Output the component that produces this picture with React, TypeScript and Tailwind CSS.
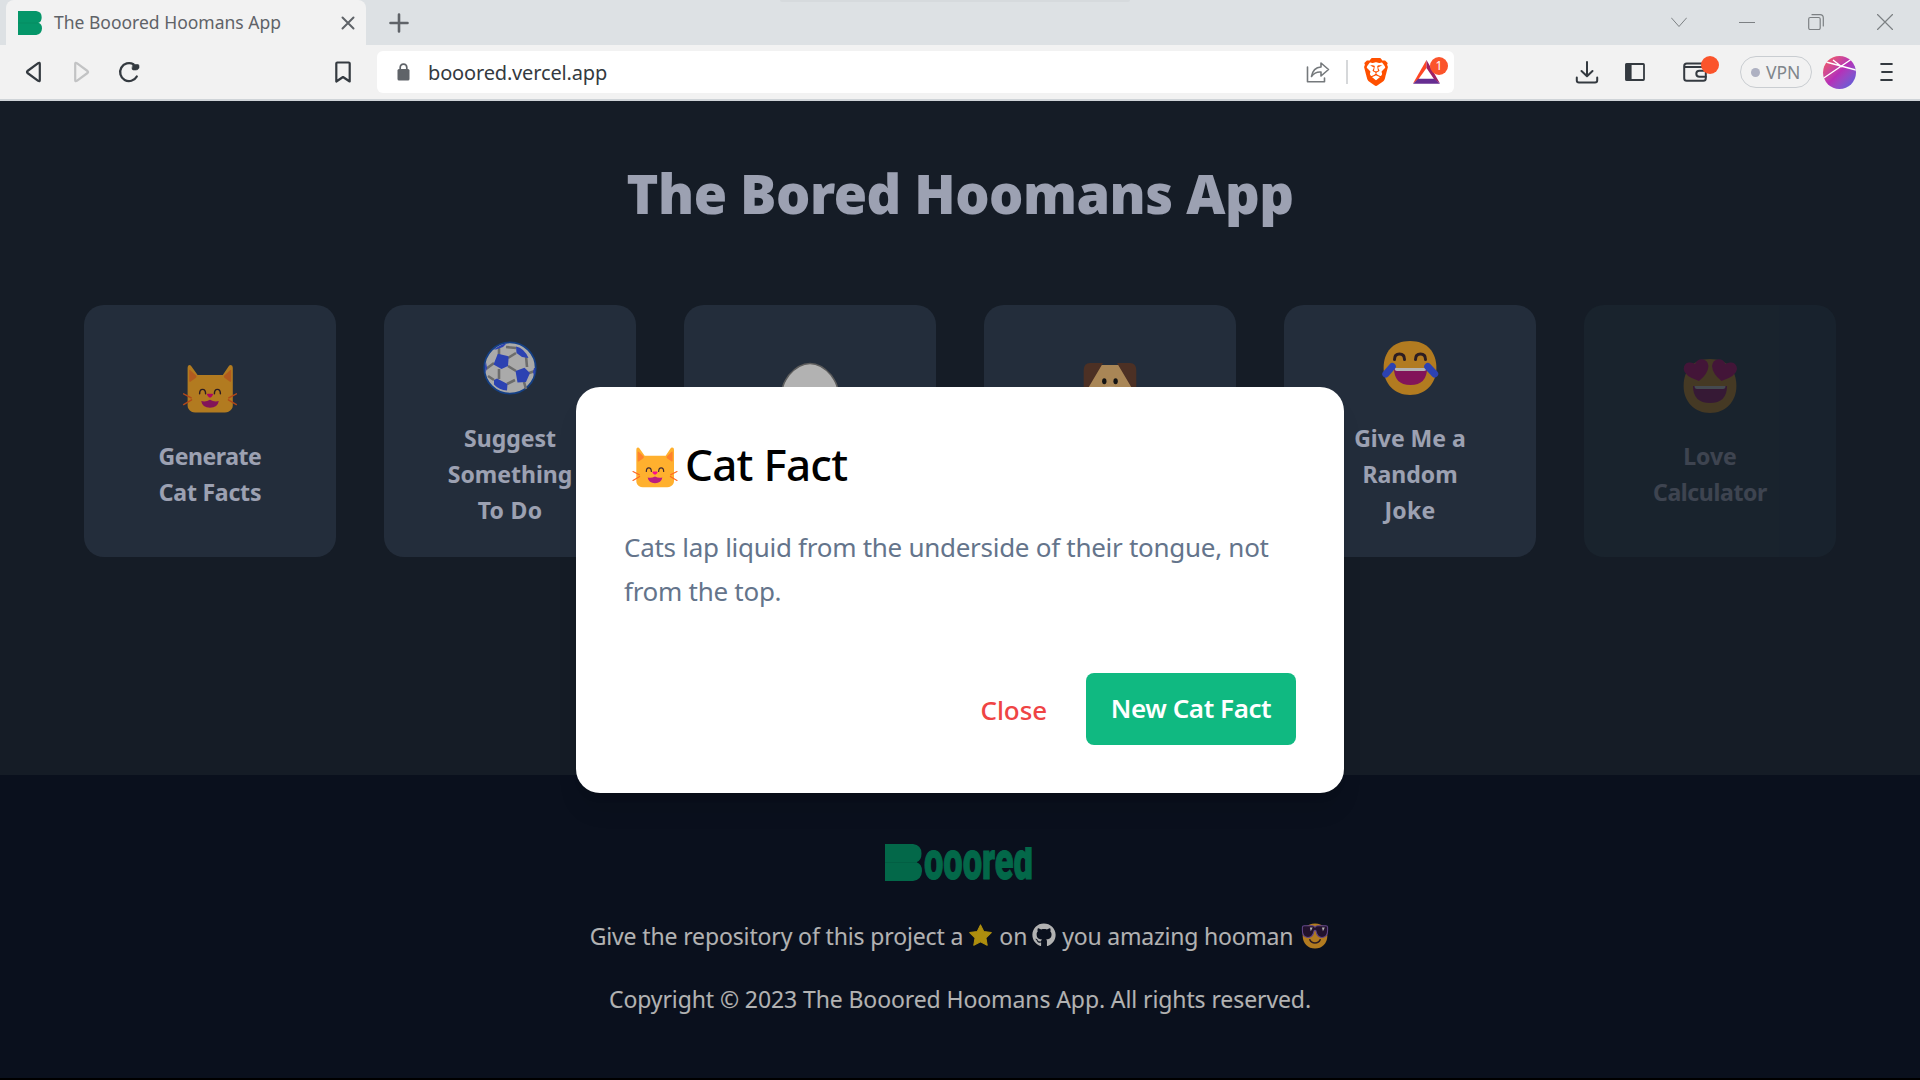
import type { ReactNode } from "react";
import { FaGithub } from "react-icons/fa";
import { SiBrave } from "react-icons/si";

function CatFace({ className }: { className: string }) {
  return (
    <svg viewBox="30 12.5 150 150" className={className}>
      <path
        d="M49 42 Q49 33 57 36 L74 60 H137 L153 36 Q162 33 162 42 V136 Q162 146 151 152 Q148 154 142 154 H68 Q62 154 59 152 Q49 146 49 136 Z"
        fill="#ffb02e"
      />
      <path d="M53 49 Q53 45 56 48 L71 62 Q72 65 70 67 L56 77 Q53 78 53 74 Z M158 49 Q158 45 155 48 L140 62 Q139 65 141 67 L155 77 Q158 78 158 74 Z" fill="#ff822d" />
      <path d="M79 107 Q79 96 86.500 96 Q94 96 94 107 M116 107 Q116 96 123.500 96 Q131 96 131 107" fill="none" stroke="#402a32" strokeWidth="3.600" strokeLinecap="round" />
      <path d="M97 109 Q97 107 100 107 H110 Q113 107 113 109 Q110 115 105 117 Q100 115 97 109 Z" fill="#f70a8d" />
      <path d="M83 125 Q94 128 105 122 Q116 128 127 125 Q124 142 105 142 Q86 142 83 125 Z" fill="#bb1d80" />
      <path d="M39 107 L58 117 M39 134 L59 122 M171 107 L152 117 M171 134 L151 122" stroke="#ff6723" strokeWidth="3.500" strokeLinecap="round" />
    </svg>
  );
}

function SoccerBall() {
  return (
    <svg viewBox="0 0 60 60" className="size-[60px]">
      <circle cx="30" cy="30" r="25.700" fill="#f4f4f4" stroke="#1d5bbf" strokeWidth="1.800" />
      <path
        d="M19 10 V17 M28 20 L36 15 M28 28 L36 33 M19 31 V41 M46 18 L47 29 M35 42 L27 46 M14 25 L6 31 M44 44 L46 51 M49 35 L55 33 M26 9 L36 10 M8 38 L14 42"
        stroke="#9b9b9b"
        strokeWidth="2.600"
        fill="none"
      />
      <path
        d="M17.500 16.500 Q18 15.500 19 16 L27.500 18 Q28.800 18.500 28.600 20 L28 28 L21.500 31 L13.500 26.500 Z M44.500 29.700 L50 35 L46 44 L37.500 44.500 L35.500 33 Z M36 8.500 Q44 10 48.500 20 L42 19 L36.500 15 Z M17 40.500 L27.500 46 L27 52.500 Q19 52 14 46.500 V42 Z M14 11.500 Q20 6.500 27 5 L23 9 L16 11.500 Z M54 30 L55.500 30 Q55.500 34 54 38 L53 34 Z M5 28 L6 24 L7 30 L5.500 35 Z"
        fill="#3f5fff"
      />
    </svg>
  );
}

function Egg() {
  return (
    <svg viewBox="0 0 60 60" className="size-[60px]">
      <path d="M2.500 33 Q2.500 28 9 19 Q19 7.500 30 7.500 Q41 7.500 51 19 Q57.500 28 57.500 33 Q57 55 30 55 Q3 55 2.500 33 Z" fill="#fff" stroke="#848484" strokeWidth="1.500" />
    </svg>
  );
}

function Dog() {
  return (
    <svg viewBox="0 0 60 60" className="size-[60px]">
      <path d="M8 9 H52 V54 H8 Z" fill="#f3c07b" />
      <path d="M10 7 H23 L7 34 H3.700 V14 Q4 7 10 7 Z M50 7 H37 L53 34 H56.300 V14 Q56 7 50 7 Z" fill="#6d4534" />
      <ellipse cx="24.300" cy="25.300" rx="2.200" ry="3" fill="#1c1c1c" />
      <ellipse cx="35.600" cy="25.300" rx="2.200" ry="3" fill="#1c1c1c" />
      <ellipse cx="30" cy="38" rx="12" ry="8" fill="#fcd5a0" />
    </svg>
  );
}

const facePath = "M30 3 C47 3 56.400 14 56.400 30 C56.400 46 45 57 30 57 C15 57 3.600 46 3.600 30 C3.600 14 13 3 30 3 Z";

function JoyFace() {
  return (
    <svg viewBox="0 0 60 60" className="size-[60px]">
      <path d={facePath} fill="#ffb02e" />
      <path d="M14.500 21.500 Q14.500 16 19.500 16 Q24.500 16 24.500 21.500 M35.500 21.500 Q35.500 16 40.500 16 Q45.500 16 45.500 21.500" fill="none" stroke="#402a32" strokeWidth="3" strokeLinecap="round" />
      <path d="M14 30 H47 Q47 47 30.500 47 Q14 47 14 30 Z" fill="#bb1d80" />
      <path d="M14.500 30 H46.500 Q46.500 33 44 33 H17 Q14.500 33 14.500 30 Z" fill="#fff" />
      <path d="M12.300 28.500 L5.800 36 M47.700 28.500 L54.700 36" stroke="#3f5fff" strokeWidth="7" strokeLinecap="round" />
    </svg>
  );
}

function HeartEyes() {
  return (
    <svg viewBox="0 0 60 60" className="size-[60px]">
      <path d={facePath} fill="#ffb02e" />
      <path
        d="M19 25 Q4 20 3.700 13 Q4 7 9 6.500 Q12.500 6 15 8 Q17 3 22 3.200 Q28 4 28.500 10 Q28 18 19 25 Z M41.500 25 Q56.500 20 57 13 Q56.500 7 51.500 6.500 Q48 6 45.500 8 Q43.500 3 38.500 3.200 Q32.500 4 32 10 Q32.500 18 41.500 25 Z"
        fill="#f70a8d"
      />
      <path d="M13 30 H47 Q47 47 30 47 Q13 47 13 30 Z" fill="#bb1d80" />
      <path d="M14.500 30 H45.500 Q45.500 33 43 33 H17 Q14.500 33 14.500 30 Z" fill="#fff" />
    </svg>
  );
}

function CoolFace() {
  return (
    <svg viewBox="0 0 60 60" className="size-[28px]">
      <path d={facePath} fill="#ffb02e" />
      <path d="M19 38 Q22 45 30 45 Q38 45 41 38" fill="none" stroke="#402a32" strokeWidth="3.500" strokeLinecap="round" />
      <path d="M3 11 Q3 8 7 8 H24 Q28 8 30 11 Q32 8 36 8 H53 Q57 8 57 11 V19 Q57 33 45 33 Q34 33 32 19 Q30 16 28 19 Q26 33 15 33 Q3 33 3 19 Z" fill="#321b41" stroke="#8d65c5" strokeWidth="2.200" />
      <path d="M19 12 L25 12 L21 20 Z M45 12 L51 12 L47 20 Z" fill="#fff" />
    </svg>
  );
}

function BrandMark({ className }: { className: string }) {
  return (
    <svg viewBox="0 0 37 37" preserveAspectRatio="none" className={className}>
      <path d="M0 0 H28 Q36.500 1 36.500 9.500 Q36.500 16.500 31.500 18.300 Q37 20 37 27 Q36.500 36 28 37 H0 Z" fill="#059669" />
      <path d="M0 18.500 H31" stroke="#04805a" strokeWidth="0.600" />
    </svg>
  );
}

function Stroke({ className, box, children }: { className: string; box: string; children: ReactNode }) {
  return (
    <svg viewBox={box} fill="none" stroke="currentColor" strokeLinejoin="round" strokeLinecap="round" className={className}>
      {children}
    </svg>
  );
}

function TabStrip() {
  return (
    <div className="relative flex h-[45px] items-center bg-[#dde1e4] pl-1.5 text-[#5f6368]">
      <div className="absolute top-0 left-[780px] h-0.5 w-[350px] rounded-b-full bg-[#d6dadd]" />
      <div className="flex h-full w-[360px] items-center rounded-t-lg bg-[#f2f2f2] pr-[11px] pl-3">
        <BrandMark className="h-6 w-6" />
        <span className="ml-3 flex-1 text-[17.500px] whitespace-nowrap">The Booored Hoomans App</span>
        <Stroke box="0 0 14 14" className="size-3.5">
          <path d="M1.500 1.500 L12.500 12.500 M12.500 1.500 L1.500 12.500" strokeWidth="2" />
        </Stroke>
      </div>
      <Stroke box="0 0 20 20" className="ml-[23px] size-5">
        <path d="M10 1.500 V18.500 M1.500 10 H18.500" strokeWidth="2.600" />
      </Stroke>
      <div className="-mt-0.5 ml-auto flex items-center pr-[27px] text-[#7c8083]">
        <Stroke box="0 0 16 16" className="size-4">
          <path d="M0.500 4 L8 12.500 L15.500 4" strokeWidth="1" />
        </Stroke>
        <Stroke box="0 0 16 16" className="ml-[52px] size-4">
          <path d="M0.500 8.500 H15.500" strokeWidth="1.200" />
        </Stroke>
        <Stroke box="0 0 16 16" className="ml-[53px] size-4">
          <rect x="0.700" y="3.500" width="11.500" height="12" rx="1.500" strokeWidth="1.200" />
          <path d="M4 0.700 H12 Q15.300 0.700 15.300 4 V12" strokeWidth="1.200" />
        </Stroke>
        <Stroke box="0 0 16 16" className="ml-[53px] size-4">
          <path d="M0.500 0.500 L15.500 15.500 M15.500 0.500 L0.500 15.500" strokeWidth="1.200" />
        </Stroke>
      </div>
    </div>
  );
}

function Toolbar() {
  return (
    <div className="flex h-14 items-center border-b-2 border-[#cfd4d8] bg-[#f2f2f2] text-[#343a40]">
      <Stroke box="0 0 17 22" className="ml-[25px] h-[22px] w-[17px]">
        <path d="M14.800 2.800 V19.200 Q14.800 20.800 13.200 19.900 L2.500 12 Q1.500 11 2.500 10 L13.200 2.100 Q14.800 1.200 14.800 2.800 Z" strokeWidth="2.200" />
      </Stroke>
      <Stroke box="0 0 17 22" className="ml-[31px] h-[22px] w-[17px] text-[#c2c3c4]">
        <path d="M2.200 2.800 V19.200 Q2.200 20.800 3.800 19.900 L14.500 12 Q15.500 11 14.500 10 L3.800 2.100 Q2.200 1.200 2.200 2.800 Z" strokeWidth="2.200" />
      </Stroke>
      <Stroke box="0 0 22 22" className="ml-7 size-[22px]">
        <path d="M15.500 3.300 A8.900 9 0 1 0 18.800 15.500" strokeWidth="2.300" />
        <path d="M15 3.500 H20 Q21 3.500 21 5 V7 Q20 9 18 9 H15.500 Q14 9 14 7.500 Z" fill="currentColor" strokeWidth="0.600" />
      </Stroke>
      <Stroke box="0 0 16 22" className="ml-[195px] h-[22px] w-4">
        <path d="M1.300 2.500 Q1.300 1.500 2.300 1.500 H13.700 Q14.700 1.500 14.700 2.500 V20.500 L8 16 L1.300 20.500 Z" strokeWidth="2.200" />
      </Stroke>
      <div className="ml-[26px] flex h-[42px] w-[1077px] items-center rounded-md bg-white">
        <svg viewBox="0 0 13 18" className="ml-5 h-[18px] w-[13px]">
          <path d="M3.200 7 V4.500 Q3.200 1.200 6.500 1.200 Q9.800 1.200 9.800 4.500 V7" fill="none" stroke="#5f6368" strokeWidth="1.700" />
          <rect x="0.500" y="6" width="12" height="11.500" rx="1.500" fill="#5f6368" />
        </svg>
        <span className="mt-px ml-[18px] flex-1 text-[20px] tracking-[-0.16px]">booored.vercel.app</span>
        <Stroke box="0 0 24 22" className="h-[22px] w-6 text-[#75797c]">
          <path d="M1.500 6 V20.700 H18.500 V17" strokeWidth="1.600" />
          <path d="M15 2 L22.500 8.500 L15 15 V11 Q9 10.500 5.500 15.500 Q7 6.500 15 6 Z" strokeWidth="1.600" />
        </Stroke>
        <div className="ml-4 h-6 w-0.5 bg-[#d6d8da]" />
        <SiBrave className="ml-[14px] size-[28px] text-[#ff5000]" />
        <div className="relative mr-[14px] ml-[23px] h-6 w-[27px]">
          <svg viewBox="0 0 26 24" preserveAspectRatio="none" className="h-6 w-[27px]">
            <path d="M13 0 V8 L5 19.500 L0 23.500 Z" fill="#ff4724" />
            <path d="M13 0 V8 L20.500 19.500 L26 23.500 Z" fill="#9e1f63" />
            <path d="M0 23.700 L5 18.700 H20.500 L26 23.700 Z" fill="#662d91" />
          </svg>
          <span className="absolute -top-[3px] left-[17px] flex size-[18px] items-center justify-center rounded-full bg-[#fb542b] text-[12px] text-white">1</span>
        </div>
      </div>
      <Stroke box="0 0 24 24" className="ml-[121px] size-6">
        <path d="M12 2 V16 M6.500 11 L12 16.300 L17.500 11 M1.800 17.500 V20.500 Q1.800 22.500 4 22.500 H20 Q22.200 22.500 22.200 20.500 V17.500" strokeWidth="2" />
      </Stroke>
      <Stroke box="0 0 20 18" className="ml-[26px] h-[18px] w-5">
        <rect x="1" y="1" width="18" height="16" rx="0.800" strokeWidth="1.800" />
        <rect x="1" y="1" width="5" height="16" fill="currentColor" strokeWidth="1.200" />
      </Stroke>
      <div className="relative ml-[38px] h-5 w-6">
        <Stroke box="0 0 24 20" className="h-5 w-6">
          <rect x="1.200" y="1.500" width="21.600" height="17.300" rx="2.500" strokeWidth="2" />
          <path d="M2 5 H22" strokeWidth="1.800" />
          <path d="M22.800 8.800 H16.500 Q13.300 8.800 13.300 11.800 Q13.300 14.800 16.500 14.800 H22.800" strokeWidth="2" />
        </Stroke>
        <span className="absolute -top-[6px] left-[18px] size-[18px] rounded-full bg-[#fb542b]" />
      </div>
      <div className="ml-[33px] flex h-8 w-[72px] items-center rounded-full border-[1.500px] border-[#c9cdd1] pl-2.5 text-[17.500px] text-[#80868b]">
        <span className="mr-1.5 size-[9px] rounded-full bg-[#aeb1c2]" />
        VPN
      </div>
      <div className="ml-[11px] size-[33px] overflow-hidden rounded-full bg-linear-135 from-[#ff5a45] via-[#b52fb8] to-[#3f5fe0]">
        <svg viewBox="0 0 33 33" className="size-full">
          <path d="M0 22.500 L28 3.500 M3 6 L33 14 M10 4 L19 11" fill="none" stroke="#fff" strokeWidth="1.400" />
        </svg>
      </div>
      <Stroke box="0 0 16 20" className="ml-[23px] h-5 w-[15px]">
        <path d="M1.500 1.500 H14.500 M2.500 10 H14.500 M1.500 18.500 H14.500" strokeWidth="2.200" strokeLinecap="butt" />
      </Stroke>
    </div>
  );
}

type Line = { text: string; className?: string };

function Card({ icon, lines, faded = false }: { icon: ReactNode; lines: Line[]; faded?: boolean }) {
  return (
    <div className={`flex size-[252px] flex-col items-center justify-center rounded-[20px] ${faded ? "bg-[#304a58] opacity-30" : "bg-[#334155]"}`}>
      <div className="mt-1 mb-[22px]">{icon}</div>
      {lines.map((line) => (
        <span key={line.text} className={`text-[23px] leading-9 font-bold whitespace-nowrap text-[#e0e7ff] ${line.className ?? ""}`}>
          {line.text}
        </span>
      ))}
    </div>
  );
}

function Footer() {
  return (
    <footer className="flex h-[303px] flex-col items-center bg-[#0f172a] pt-[69px] text-[23px] leading-9 text-white">
      <div className="mr-0.5 flex h-[37px] items-end">
        <BrandMark className="h-[37px] w-[37px]" />
        <div className="ml-0.5 flex h-[34px] w-[109px] items-end overflow-hidden">
          <span className="-mb-[7px] origin-left scale-x-[0.65] font-['Roboto'] text-[53px] leading-[53px] font-black text-[#059669] [-webkit-text-stroke:1px_#059669]">
            ooored
          </span>
        </div>
      </div>
      <p className="mt-[37px] mr-px flex items-center whitespace-nowrap">
        <span className="tracking-[-0.14px]">Give the repository of this project a</span>
        <svg viewBox="0 0 22 21" className="mr-[7px] mb-0.5 ml-1.5 h-[22px] w-[23px]">
          <path d="M11 0.800 L14.100 7.200 L21.300 8.200 L16.200 13.200 L17.400 20.300 L11 17 L4.600 20.300 L5.800 13.200 L0.700 8.200 L7.900 7.200 Z" fill="#facc15" stroke="#facc15" strokeLinejoin="round" />
        </svg>
        <span>on</span>
        <FaGithub className="mr-[6px] mb-0.5 ml-[5px] size-6" />
        <span className="tracking-[-0.22px]">you amazing hooman</span>
        <span className="ml-2"><CoolFace /></span>
      </p>
      <p className="mt-[27px] tracking-[-0.1px] whitespace-nowrap">Copyright © 2023 The Booored Hoomans App. All rights reserved.</p>
    </footer>
  );
}

function CatFactDialog() {
  return (
    <div className="absolute top-[286px] left-1/2 flex h-[406px] w-[768px] -translate-x-1/2 flex-col rounded-3xl bg-white p-12 shadow-xl">
      <div className="flex h-[57px] items-center">
        <CatFace className="mt-[3px] mr-[5px] ml-1.5 size-[50px]" />
        <h2 className="mt-0.5 text-[44px] leading-[57px] font-medium tracking-[-0.75px] text-black">Cat Fact</h2>
      </div>
      <p className="mt-[33px] text-[26px] leading-[44px] tracking-[-0.28px] text-[#64748b]">
        Cats lap liquid from the underside of their tongue, not
        <br />
        from the top.
      </p>
      <div className="mt-[60px] flex h-[72px] items-center justify-end text-[26px]">
        <button className="mt-0.5 mr-[39px] font-medium tracking-[-0.1px] text-[#ef4444]">Close</button>
        <button className="flex h-[72px] w-[210px] items-center justify-center rounded-lg bg-[#10b981] pb-0.5 font-semibold tracking-[-0.43px] whitespace-nowrap text-white">
          New Cat Fact
        </button>
      </div>
    </div>
  );
}

export default function App() {
  return (
    <div className="flex h-[1080px] w-[1920px] flex-col overflow-hidden bg-black font-['Noto_Sans',sans-serif]">
      <TabStrip />
      <Toolbar />
      <div className="relative h-[977px]">
        <main className="flex h-[674px] flex-col items-center bg-[#1f2937] pt-[57px]">
          <h1 className="text-[54px] leading-[70px] font-black tracking-[-0.5px] text-[#e0e7ff]">The Bored Hoomans App</h1>
          <div className="mt-[77px] flex gap-12">
            <Card icon={<CatFace className="size-[60px]" />} lines={[{ text: "Generate", className: "tracking-[-0.45px]" }, { text: "Cat Facts", className: "tracking-[-0.2px]" }]} />
            <Card icon={<SoccerBall />} lines={[{ text: "Suggest" }, { text: "Something" }, { text: "To Do", className: "tracking-[0.3px]" }]} />
            <Card icon={<Egg />} lines={[{ text: "Generate" }, { text: "Egg Facts" }]} />
            <Card icon={<Dog />} lines={[{ text: "Generate" }, { text: "Dog Facts" }]} />
            <Card icon={<JoyFace />} lines={[{ text: "Give Me a" }, { text: "Random" }, { text: "Joke", className: "tracking-[0.3px]" }]} />
            <Card faded icon={<HeartEyes />} lines={[{ text: "Love" }, { text: "Calculator", className: "tracking-[-0.35px]" }]} />
          </div>
        </main>
        <Footer />
        <div className="absolute inset-0 bg-black/30" />
        <CatFactDialog />
      </div>
    </div>
  );
}
